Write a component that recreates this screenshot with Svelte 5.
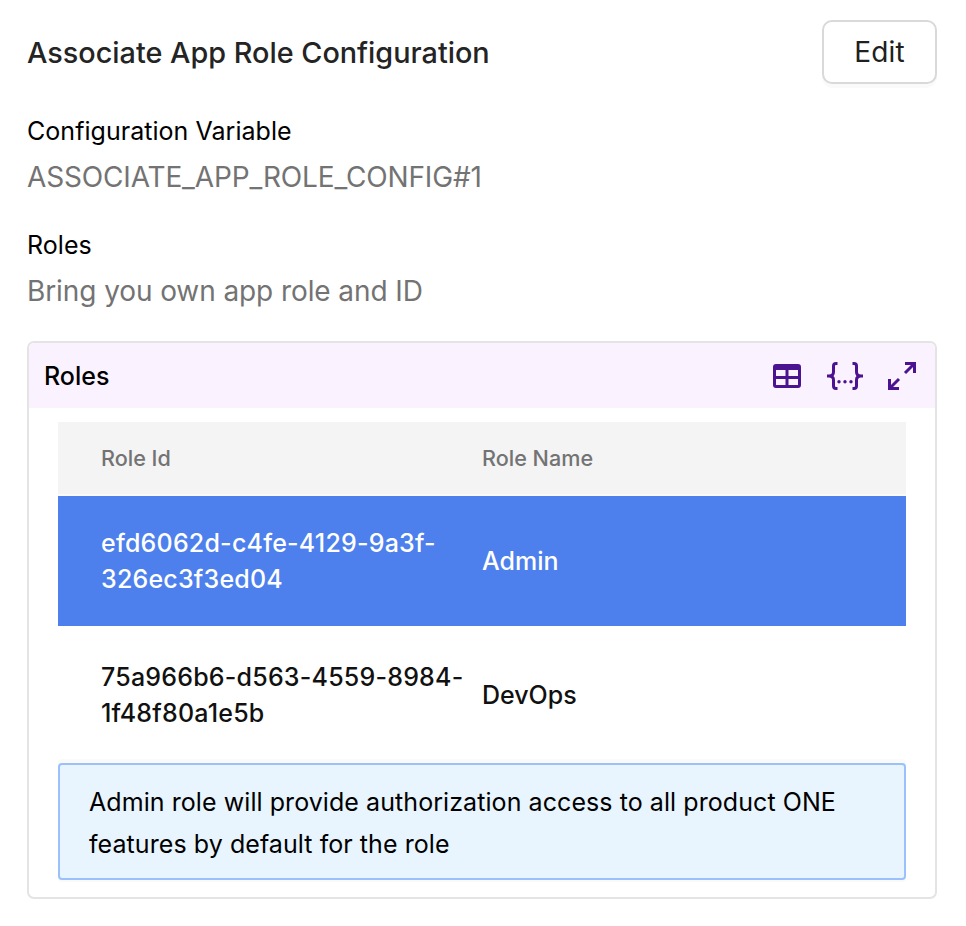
<script>
  const rows = [
    { id: ['efd6062d-c4fe-4129-9a3f-', '326ec3f3ed04'], name: 'Admin', selected: true },
    { id: ['75a966b6-d563-4559-8984-', '1f48f80a1e5b'], name: 'DevOps', selected: false }
  ];
</script>

<main>
  <header>
    <h1>Associate App Role Configuration</h1>
    <button class="edit">Edit</button>
  </header>

  <section class="field">
    <div class="label">Configuration Variable</div>
    <div class="value config">ASSOCIATE_APP_ROLE_CONFIG#1</div>
  </section>
  <section class="field second">
    <div class="label">Roles</div>
    <div class="value">Bring you own app role and ID</div>
  </section>

  <section class="card">
    <div class="bar">
      <h2>Roles</h2>
      <div class="icons">
        <svg width="28" height="24" viewBox="0 0 28 24">
          <path fill="currentColor" fill-rule="evenodd" d="M3 0H25Q28 0 28 3V21Q28 24 25 24H3Q0 24 0 21V3Q0 0 3 0ZM3 6V12H12.500V6ZM15.500 6V12H25V6ZM3 15V21H12.500V15ZM15.500 15V21H25V15Z" />
        </svg>
        <svg class="braces" width="36" height="28" viewBox="0 0 36 28" fill="none" stroke="currentColor" stroke-width="3">
          <path d="M10.500 1.500H9Q6.500 1.500 6.500 4V10Q6.500 14 2 14H0M2 14Q6.500 14 6.500 18V24Q6.500 26.500 9 26.500H10.500M25.500 1.500H27Q29.500 1.500 29.500 4V10Q29.500 14 34 14H36M34 14Q29.500 14 29.500 18V24Q29.500 26.500 27 26.500H25.500" />
          <g fill="currentColor" stroke="none"><circle cx="12" cy="19.800" r="1.700" /><circle cx="18" cy="19.800" r="1.700" /><circle cx="24" cy="19.800" r="1.700" /></g>
        </svg>
        <svg width="28" height="28" viewBox="0 0 28 28" fill="none" stroke="currentColor" stroke-width="3">
          <path d="M17 1.500H26.500V11M26 2L17 11M11 26.500H1.500V17M2 26L11 17" />
        </svg>
      </div>
    </div>
    <div class="content">
      <div class="row head"><span>Role Id</span><span>Role Name</span></div>
      {#each rows as row}
        <div class="row item" class:selected={row.selected}>
          <span class="id">{row.id[0]}<br />{row.id[1]}</span>
          <span>{row.name}</span>
        </div>
      {/each}
      <div class="note">Admin role will provide authorization access to all product ONE<br />features by default for the role</div>
    </div>
  </section>
</main>

<style>
  :global(body) { margin: 0; background: #fff; }
  * { box-sizing: border-box; }
  main { width: 966px; height: 926px; padding: 20px 29px 0 27px; font-family: Inter, sans-serif; color: #111; }
  header { display: flex; justify-content: space-between; align-items: center; height: 64px; }
  h1 { margin: 0; padding-top: 2px; font-size: 28.8px; font-weight: 500; line-height: 36px; color: #242424; }
  .edit { width: 115px; height: 64px; border: 2px solid #d9d9d9; border-radius: 10px; background: #fff; font: 400 28px/36px Inter, sans-serif; letter-spacing: .2px; color: #202020; padding: 0; box-shadow: 0 4px 0 #00000005; }
  .field { padding-top: 30px; height: 114px; }
  .label { font-size: 25px; letter-spacing: .04px; line-height: 34px; color: #000; }
  .value { margin-top: 10px; font-size: 28px; letter-spacing: -.09px; line-height: 38px; color: #737373; }
  .config { letter-spacing: -.15px; }
  .card { margin-top: 29px; width: 910px; height: 558px; border: 2px solid #e4e4e4; border-radius: 7px; overflow: hidden; }
  .bar { height: 65px; background: #faf3ff; display: flex; align-items: center; justify-content: space-between; padding: 0 19px 0 15px; }
  h2 { margin: 0; font-size: 25px; font-weight: 500; line-height: 34px; color: #000; }
  .icons { display: flex; align-items: center; gap: 25px; color: #4c1390; }
  .icons svg:first-child { margin-right: 1px; }
  svg { display: block; }
  .content { padding: 14px 29px 0; }
  .row { display: grid; grid-template-columns: 381px 1fr; align-items: center; padding-left: 43px; }
  .head { height: 74px; padding-bottom: 1px; border-bottom: 2px solid #fafafa; background: #f4f4f4; color: #737373; font-size: 21.6px; font-weight: 500; }
  .item { height: 137px; font-size: 25px; font-weight: 500; line-height: 36px; }
  .item .id { letter-spacing: .21px; }
  .selected { height: 130px; background: #4d80ed; color: #fff; }
  .note { width: 848px; height: 117px; border: 2px solid #9bc1fc; border-radius: 4px; background: #e8f5fe; padding: 16px 29px; font-size: 25px; letter-spacing: .07px; line-height: 42px; color: #000; white-space: nowrap; box-shadow: 0 -4px 0 #fafafa, 0 2px 0 #fafafa; }
</style>
